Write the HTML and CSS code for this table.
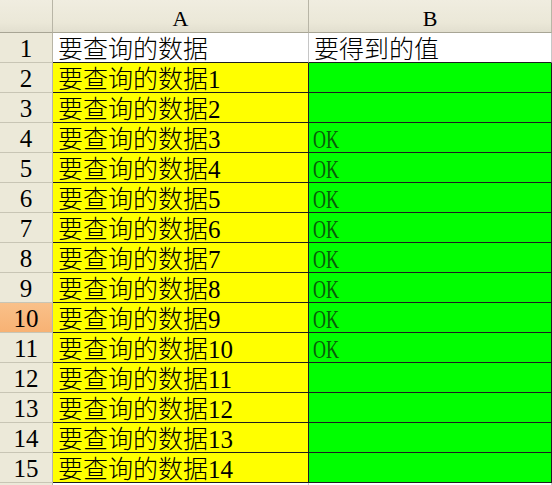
FILE: index.html
```html
<!DOCTYPE html>
<html lang="zh">
<head>
<meta charset="utf-8">
<title>Sheet</title>
<link rel="stylesheet" href="styles.css">
</head>
<body>
<div class="sheet">
  <div class="hd corner"></div><div class="hd col">A</div><div class="hd col">B</div>

  <div class="rh">1</div><div class="c plain">要查询的数据</div><div class="c plain">要得到的值</div>
  <div class="rh">2</div><div class="c y">要查询的数据<span class="n">1</span></div><div class="c g"></div>
  <div class="rh">3</div><div class="c y">要查询的数据<span class="n">2</span></div><div class="c g"></div>
  <div class="rh">4</div><div class="c y">要查询的数据<span class="n">3</span></div><div class="c g"><span class="ok">OK</span></div>
  <div class="rh">5</div><div class="c y">要查询的数据<span class="n">4</span></div><div class="c g"><span class="ok">OK</span></div>
  <div class="rh">6</div><div class="c y">要查询的数据<span class="n">5</span></div><div class="c g"><span class="ok">OK</span></div>
  <div class="rh">7</div><div class="c y">要查询的数据<span class="n">6</span></div><div class="c g"><span class="ok">OK</span></div>
  <div class="rh">8</div><div class="c y">要查询的数据<span class="n">7</span></div><div class="c g"><span class="ok">OK</span></div>
  <div class="rh">9</div><div class="c y">要查询的数据<span class="n">8</span></div><div class="c g"><span class="ok">OK</span></div>
  <div class="rh sel">10</div><div class="c y">要查询的数据<span class="n">9</span></div><div class="c g"><span class="ok">OK</span></div>
  <div class="rh">11</div><div class="c y">要查询的数据<span class="n">10</span></div><div class="c g"><span class="ok">OK</span></div>
  <div class="rh">12</div><div class="c y">要查询的数据<span class="n">11</span></div><div class="c g"></div>
  <div class="rh">13</div><div class="c y">要查询的数据<span class="n">12</span></div><div class="c g"></div>
  <div class="rh">14</div><div class="c y">要查询的数据<span class="n">13</span></div><div class="c g"></div>
  <div class="rh">15</div><div class="c y">要查询的数据<span class="n">14</span></div><div class="c g"></div>
  <div class="rh tail"></div><div class="c plain tail"></div><div class="c plain tail"></div>
</div>
</body>
</html>
```
FILE: styles.css
```css
html, body {
  margin: 0;
  padding: 0;
  background: #ffffff;
}
body {
  width: 552px;
  height: 485px;
  overflow: hidden;
}
.sheet {
  display: grid;
  grid-template-columns: 53px 256px 243px;
  grid-template-rows: 33px repeat(15, 30px) 2px;
  font-family: "Liberation Serif", "Noto Sans CJK SC", serif;
  color: #000;
}
.sheet > div {
  box-sizing: border-box;
  white-space: nowrap;
}
.hd {
  background: linear-gradient(#f0ede0, #ebe8d8 70%, #e2dfcf);
  border-right: 1px solid #b8b5a6;
  border-bottom: 1px solid #a8a595;
  font-size: 22px;
  text-align: center;
  line-height: 38px;
}
.rh {
  background: #ece9d9;
  border-right: 1px solid #b8b5a6;
  border-bottom: 1px solid #c8c5b5;
  font-size: 25px;
  text-align: center;
  line-height: 31px;
}
.rh.sel {
  background: linear-gradient(#f9c089, #f7b274);
}
.c {
  font-family: "Noto Sans CJK SC", sans-serif;
  font-weight: 300;
  font-size: 25px;
  line-height: 29px;
  padding-left: 5px;
  border-right: 1px solid #1e1e1e;
  border-bottom: 1px solid #1e1e1e;
}
.c.plain {
  background: #ffffff;
  border-right-color: #c6c6c6;
}
.c.y {
  background: #ffff00;
}
.c.g {
  background: #00ff00;
  padding-left: 4px;
}
.tail {
  border-bottom: none;
}
.n {
  font-family: "Liberation Serif", serif;
  font-size: 25px;
}
.ok {
  display: inline-block;
  font-family: "Liberation Serif", serif;
  font-size: 25px;
  color: #0a5c0a;
  transform: scaleX(0.72);
  transform-origin: left center;
}
```
